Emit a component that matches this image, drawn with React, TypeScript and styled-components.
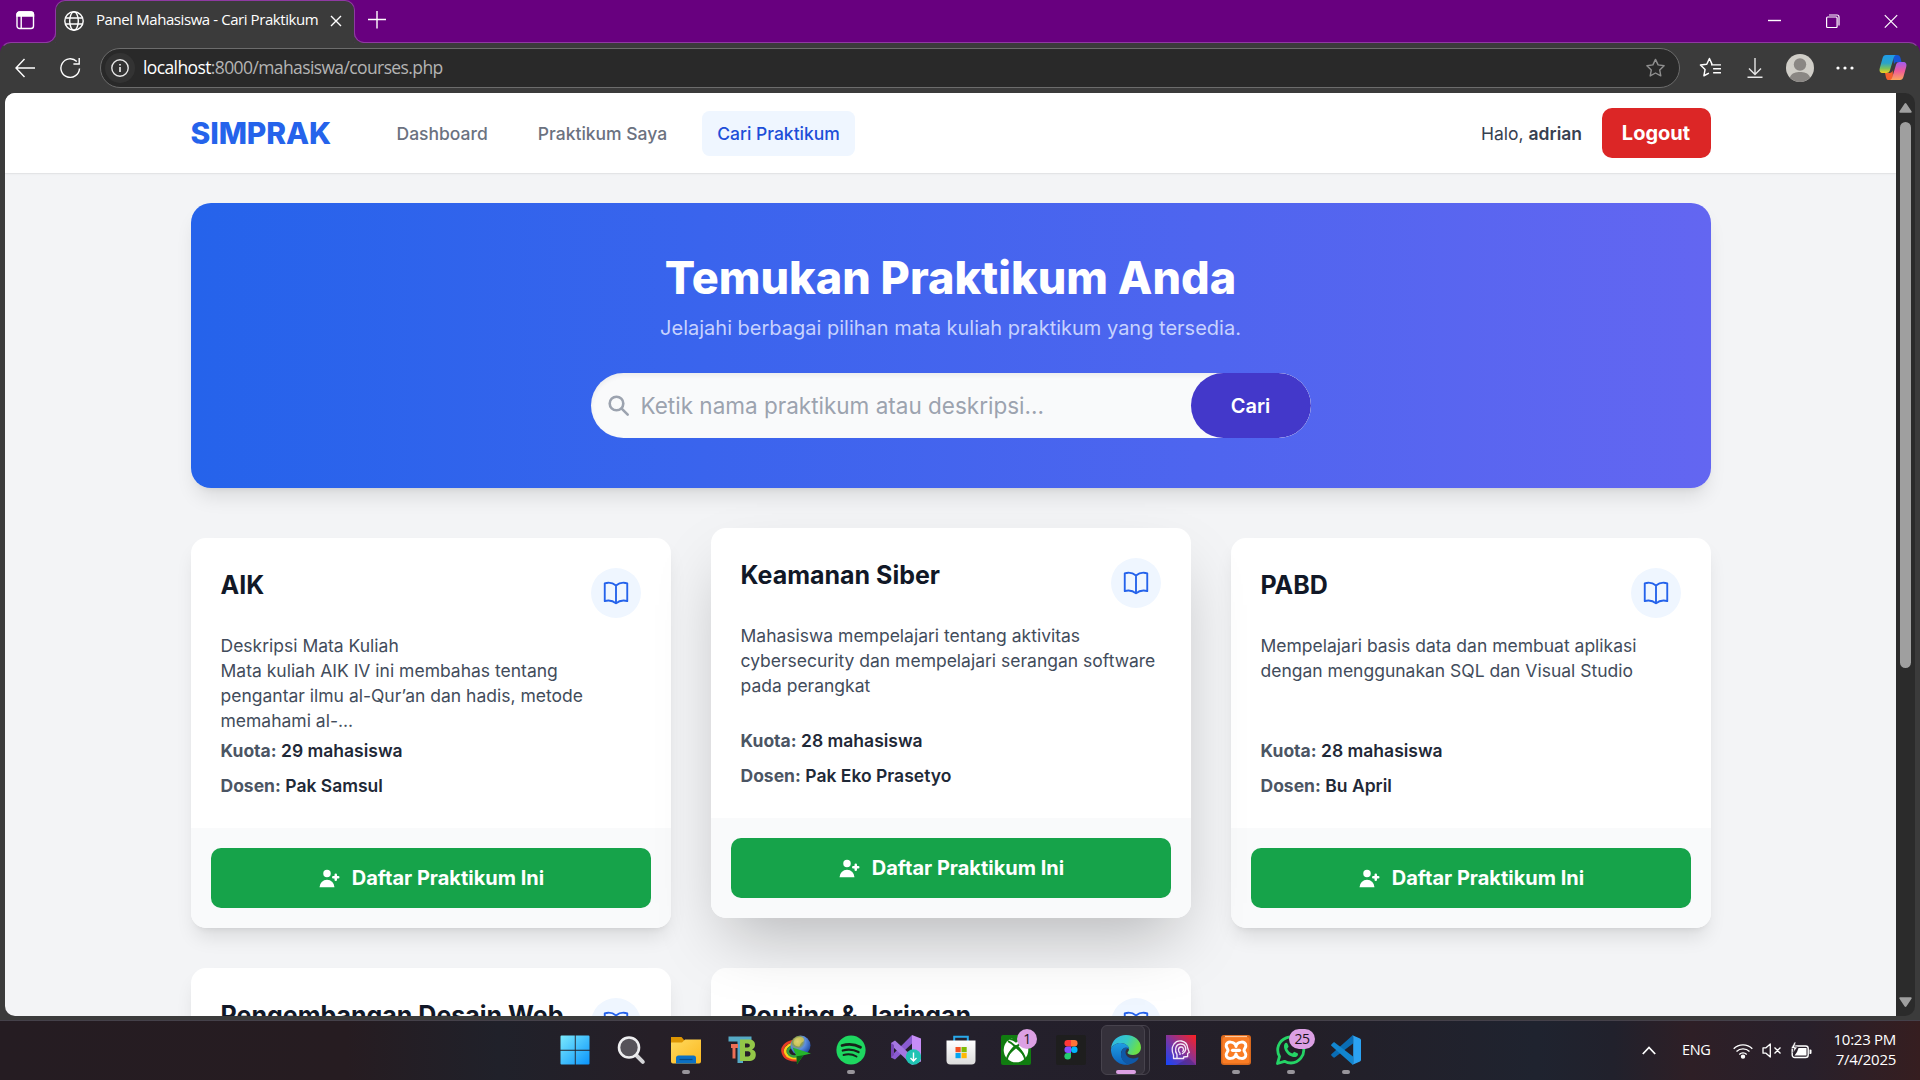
import React from 'react';
import styled, { createGlobalStyle, css } from 'styled-components';

const UI = "'Open Sans', 'Noto Sans', sans-serif";

const Global = createGlobalStyle`
  *, *::before, *::after { box-sizing: border-box; }
  body { margin: 0; background: #3b3b3b; font-family: Inter, 'Liberation Sans', sans-serif; overflow: hidden; }
  h1, h2, h3, p { margin: 0; }
  button, input { font-family: inherit; border: 0; }
  svg { display: block; flex: none; }
`;

const Desktop = styled.div`
  width: 1920px;
  height: 1080px;
  display: flex;
  flex-direction: column;
  overflow: hidden;
  background: #3b3b3b;
`;

/* ---------- Browser chrome ---------- */
const TitleBar = styled.div`
  height: 42px;
  flex: none;
  background: #68007f;
  display: flex;
  align-items: flex-start;
  color: #fff;
`;
const WorkspaceButton = styled.div`
  width: 55px;
  height: 41px;
  display: flex;
  padding-left: 16px;
  padding-top: 11px;
`;
const Tab = styled.div`
  position: relative;
  z-index: 2;
  width: 300px;
  height: 43px;
  display: flex;
  align-items: center;
  padding: 0 12px 3px 8px;
  background: #3b3b3b;
  border: 1px solid #8f3aa2;
  border-bottom: 0;
  border-radius: 10px 10px 0 0;
  &::before, &::after {
    content: '';
    position: absolute;
    bottom: 0;
    width: 10px;
    height: 10px;
    border-bottom: 1px solid #8f3aa2;
  }
  &::before {
    left: -10px;
    border-right: 1px solid #8f3aa2;
    border-bottom-right-radius: 10px;
    box-shadow: 2px 2px 0 1px #3b3b3b;
    clip-path: inset(0 -1px 0 0);
  }
  &::after {
    right: -10px;
    border-left: 1px solid #8f3aa2;
    border-bottom-left-radius: 10px;
    box-shadow: -2px 2px 0 1px #3b3b3b;
    clip-path: inset(0 0 0 -1px);
  }
`;
const TabTitle = styled.span`
  flex: 1;
  margin-left: 12px;
  padding-bottom: 3px;
  font: 400 15px/20px ${UI};
  letter-spacing: -0.42px;
  white-space: nowrap;
`;
const NewTab = styled.div`
  padding: 11px 0 0 13px;
`;
const WindowControls = styled.div`
  margin-left: auto;
  display: flex;
  gap: 44px;
  padding: 14px 22px 0 0;
`;
const Toolbar = styled.div`
  height: 51px;
  flex: none;
  background: #68007f;
`;
const ToolbarInner = styled.div`
  height: 51px;
  display: flex;
  align-items: center;
  padding: 0 11px 0 14px;
  background: #3b3b3b;
  border: 1px solid transparent;
  border-top-color: #8f3aa2;
  border-radius: 11px 11px 0 0;
`;
const AddressBar = styled.div`
  width: 1580px;
  height: 40px;
  margin-left: 19px;
  display: flex;
  align-items: center;
  padding: 0 13px 0 4px;
  background: #292929;
  border: 1px solid #6c6c6c;
  border-radius: 20px;
`;
const SiteInfo = styled.div`
  width: 30px;
  height: 30px;
  border-radius: 15px;
  background: #333;
  display: grid;
  place-items: center;
`;
const Url = styled.span`
  flex: 1;
  margin-left: 8px;
  padding-bottom: 2px;
  color: #b4b4b4;
  font: 400 17.5px/24px ${UI};
  letter-spacing: -0.61px;
  b { font-weight: 400; color: #fff; }
`;
const ToolbarActions = styled.div`
  display: flex;
  align-items: center;
  margin-left: 19px;
`;
const ActionSlot = styled.div<{ $w: number }>`
  width: ${p => p.$w}px;
  display: flex;
`;

/* ---------- Window body ---------- */
const WindowBody = styled.div`
  height: 927px;
  flex: none;
  display: flex;
  padding: 0 5px 4px;
`;
const Viewport = styled.div`
  width: 1891px;
  height: 923px;
  overflow: hidden;
  background: #f3f4f6;
  border-radius: 10px 0 0 10px;
`;
const Scrollbar = styled.div`
  width: 19px;
  height: 923px;
  background: #2b2b2b;
  border-radius: 0 10px 10px 0;
  display: flex;
  flex-direction: column;
  align-items: center;
  padding: 10px 0 9px;
`;
const Thumb = styled.div`
  width: 11px;
  height: 546px;
  margin: 9px 0 auto;
  border-radius: 6px;
  background: #9f9f9f;
`;

/* ---------- Page header ---------- */
const Header = styled.header`
  height: 80px;
  background: #fff;
  box-shadow: 0 1px 0 rgba(0, 0, 0, 0.03), 0 1px 2.5px rgba(0, 0, 0, 0.05);
`;
const Container = styled.div`
  width: 1520px;
  margin: 0 auto;
`;
const HeaderRow = styled(Container)`
  height: 80px;
  display: flex;
  align-items: center;
`;
const Logo = styled.span`
  width: 141px;
  font-size: 30px;
  line-height: 40px;
  font-weight: 800;
  letter-spacing: -0.1px;
  color: #2563eb;
`;
const Nav = styled.nav`
  display: flex;
  gap: 20px;
  margin-left: 50px;
`;
const NavLink = styled.a<{ $active?: boolean }>`
  padding: 10px 15px;
  font-size: 17.5px;
  line-height: 25px;
  font-weight: 500;
  border-radius: 7.5px;
  color: ${p => (p.$active ? '#1d4ed8' : '#6b7280')};
  background: ${p => (p.$active ? '#eff6ff' : 'transparent')};
`;
const Greeting = styled.span`
  margin-left: auto;
  margin-right: 19.5px;
  font-size: 17.5px;
  line-height: 25px;
  color: #374151;
  b { font-weight: 600; }
`;
const Logout = styled.button`
  width: 109px;
  height: 50px;
  padding: 0;
  border-radius: 10px;
  background: #dc2626;
  color: #fff;
  font-size: 20px;
  font-weight: 700;
`;

/* ---------- Banner ---------- */
const Banner = styled.section`
  height: 285px;
  margin-top: 30px;
  padding-top: 50px;
  display: flex;
  flex-direction: column;
  align-items: center;
  border-radius: 20px;
  background: linear-gradient(to right, #2563eb, #6366f1);
  box-shadow: 0 12.5px 19px -4px rgba(0, 0, 0, 0.1), 0 5px 7.5px -5px rgba(0, 0, 0, 0.1);
  color: #fff;
`;
const BannerTitle = styled.h1`
  font-size: 45px;
  line-height: 50px;
  font-weight: 800;
`;
const BannerText = styled.p`
  margin-top: 10px;
  font-size: 20px;
  line-height: 30px;
  color: #c7d2fe;
`;
const Search = styled.form`
  width: 720px;
  height: 65px;
  margin-top: 30px;
  display: flex;
  align-items: center;
  overflow: hidden;
  padding-left: 17px;
  border-radius: 33px;
  background: #f9fafb;
  box-shadow: inset 0 2.5px 5px rgba(0, 0, 0, 0.06);
`;
const SearchInput = styled.input`
  flex: 1;
  min-width: 0;
  padding: 0;
  margin-left: 11px;
  background: transparent;
  font-size: 22.5px;
  line-height: 35px;
  outline: 0;
  &::placeholder { color: #9ca3af; opacity: 1; }
`;
const SearchButton = styled.button`
  width: 120px;
  height: 65px;
  padding: 0;
  border-radius: 33px;
  background: #4338ca;
  color: #fff;
  font-size: 20px;
  font-weight: 600;
`;

/* ---------- Course cards ---------- */
const Grid = styled.section`
  margin-top: 50px;
  display: grid;
  grid-template-columns: repeat(3, 480px);
  gap: 40px;
`;
const raised = css`
  transform: translateY(-10px);
  box-shadow: 0 31px 62px -15px rgba(0, 0, 0, 0.25);
`;
const Card = styled.article<{ $raised?: boolean }>`
  height: 390px;
  display: flex;
  flex-direction: column;
  overflow: hidden;
  border-radius: 15px;
  background: #fff;
  box-shadow: 0 12.5px 19px -4px rgba(0, 0, 0, 0.1), 0 5px 7.5px -5px rgba(0, 0, 0, 0.1);
  ${p => p.$raised && raised}
`;
const CardBody = styled.div`
  flex: 1;
  padding: 30px;
`;
const CardHead = styled.div`
  height: 50px;
  display: flex;
  justify-content: space-between;
`;
const CardTitle = styled.h2`
  font-size: 25px;
  line-height: 35px;
  font-weight: 700;
  color: #111827;
`;
const BookBadge = styled.div`
  width: 50px;
  height: 50px;
  border-radius: 25px;
  background: #eff6ff;
  color: #2563eb;
  display: grid;
  place-items: center;
`;
const Description = styled.p`
  height: 100px;
  margin-top: 15px;
  font-size: 17.5px;
  line-height: 25px;
  color: #424c5b;
  white-space: pre-line;
`;
const Meta = styled.p<{ $first?: boolean }>`
  margin-top: ${p => (p.$first ? 5 : 10)}px;
  font-size: 17.5px;
  line-height: 25px;
  font-weight: 600;
  color: #1f2937;
  b { font-weight: 700; color: #4b5563; }
`;
const CardFooter = styled.div`
  height: 100px;
  padding: 20px;
  background: #f9fafb;
`;
const Enroll = styled.button`
  width: 100%;
  height: 60px;
  display: flex;
  align-items: center;
  justify-content: center;
  gap: 10px;
  border-radius: 10px;
  background: #16a34a;
  color: #fff;
  font-size: 20px;
  font-weight: 700;
`;

/* ---------- Taskbar ---------- */
const Taskbar = styled.footer`
  height: 60px;
  flex: none;
  display: flex;
  align-items: center;
  border-top: 1px solid #45414a;
  background: linear-gradient(90deg, #251c22 0%, #261c21 18%, #20212a 26%, #261f27 34%, #24202c 50%, #231f28 68%, #1f232f 80%, #21212c 84%, #2e1f26 88%, #28202b 94%, #361e20 100%);
`;
const Apps = styled.div`
  display: flex;
  height: 59px;
  padding-left: 546px;
`;
const AppSlot = styled.div<{ $w?: number; $active?: boolean; $shift?: number }>`
  position: relative;
  width: ${p => p.$w ?? 55}px;
  height: 50px;
  margin-top: 4px;
  padding-top: 10px;
  padding-left: ${p => p.$shift ?? 0}px;
  display: flex;
  justify-content: center;
  ${p => p.$active && css`
    &::before, &::after {
      content: '';
      position: absolute;
      top: 0;
      height: 50px;
      border-radius: 6px;
      border: 1px solid #47434d;
    }
    &::before { left: 14px; width: 38px; background: #29252f; }
    &::after { left: 3px; width: 44px; background: #35313b; }
  `}
  svg { position: relative; z-index: 1; }
`;
const Indicator = styled.span<{ $active?: boolean }>`
  position: absolute;
  z-index: 2;
  bottom: 1px;
  left: ${p => (p.$active ? 18 : 24)}px;
  width: ${p => (p.$active ? 20 : 8)}px;
  height: 4px;
  border-radius: 2px;
  background: ${p => (p.$active ? '#dca0e4' : '#98959b')};
`;
const Badge = styled.span<{ $wide?: boolean }>`
  position: absolute;
  z-index: 2;
  top: 4px;
  left: ${p => (p.$wide ? 26 : 29)}px;
  width: ${p => (p.$wide ? 26 : 20)}px;
  height: 20px;
  border-radius: 10px;
  background: #dca0e4;
  color: #1c1420;
  font: 400 14px/20px ${UI};
  letter-spacing: -0.6px;
  text-align: center;
`;
const Tray = styled.div`
  margin-left: auto;
  padding-right: 24px;
  display: flex;
  align-items: center;
  height: 59px;
  color: #fff;
  font: 400 15px/20px ${UI};
`;
const Lang = styled.span`
  width: 29px;
  margin: 0 22px 0 26px;
  padding-bottom: 2px;
  font-size: 14.5px;
  letter-spacing: -0.4px;
  white-space: nowrap;
`;
const StatusIcons = styled.div`
  display: flex;
  align-items: center;
  gap: 9px;
  margin-right: 20px;
`;
const Clock = styled.div`
  width: 64px;
  padding-bottom: 4px;
  text-align: right;
  white-space: nowrap;
  letter-spacing: -0.28px;
`;

/* ---------- Browser icons ---------- */
const line = { fill: 'none', stroke: 'currentColor', strokeWidth: 1.4 };
const StarPath = 'M10 1.4l2.6 5.5 6 .8-4.4 4.2 1.1 6-5.3-2.9-5.3 2.9 1.1-6L1.4 7.7l6-.8z';

const CopilotIcon = () => (
  <svg width="28" height="27" viewBox="0 0 28 27">
    <defs>
      <linearGradient id="cpA" x1="0" y1="0" x2="0" y2="1">
        <stop offset="0" stopColor="#1f9be8" /><stop offset=".45" stopColor="#2aa3c9" /><stop offset=".75" stopColor="#7cc25a" /><stop offset="1" stopColor="#f5cf1e" />
      </linearGradient>
      <linearGradient id="cpB" x1="0" y1="0" x2="0" y2="1">
        <stop offset="0" stopColor="#a15cf0" /><stop offset=".5" stopColor="#ee5a9a" /><stop offset="1" stopColor="#fba65c" />
      </linearGradient>
    </defs>
    <path d="M14 1h4c2 0 3 1.200 3.500 3l1 4h-4c-2 0-3 .8-3.500 2.500z" fill="#1555d6" />
    <path d="M14 26h-4c-1.800 0-2.600-1-3-2.600L6 19h4.500c1.800 0 2.600-1 3.200-2.800z" fill="#f4602d" />
    <path d="M7 1h10c-1.500.6-2 1.800-2.500 3.500l-3.600 12C10.400 18.200 9 19 7.500 19H4c-3 0-4-2-3.200-5L3.600 4C4.200 2 5.200 1 7 1z" fill="url(#cpA)" />
    <path d="M21 26H11c1.500-.6 2-1.800 2.500-3.500l3.600-12C17.600 8.800 19 8 20.500 8H24c3 0 4 2 3.200 5l-2.800 10c-.6 2-1.600 3-3.400 3z" fill="url(#cpB)" />
  </svg>
);

/* ---------- Page icons ---------- */
const BookIcon = () => (
  <svg width="30" height="30" viewBox="0 0 24 24" fill="none" stroke="currentColor" strokeWidth="1.5" strokeLinecap="round" strokeLinejoin="round">
    <path d="M12 6.042A8.967 8.967 0 0 0 6 3.750c-1.052 0-2.062.180-3 .512v14.250A8.987 8.987 0 0 1 6 18c2.305 0 4.408.867 6 2.292m0-14.250a8.966 8.966 0 0 1 6-2.292c1.052 0 2.062.180 3 .512v14.250A8.987 8.987 0 0 0 18 18a8.967 8.967 0 0 0-6 2.292m0-14.250v14.250" />
  </svg>
);
const UserAddIcon = () => (
  <svg width="25" height="25" viewBox="0 0 20 20" fill="currentColor">
    <path d="M8 9a3 3 0 100-6 3 3 0 000 6zM8 11a6 6 0 016 6H2a6 6 0 016-6zM16 7a1 1 0 10-2 0v1h-1a1 1 0 100 2h1v1a1 1 0 102 0v-1h1a1 1 0 100-2h-1V7z" />
  </svg>
);

/* ---------- Taskbar icons ---------- */
const I = ({ children }: { children: React.ReactNode }) => (
  <svg width="30" height="30" viewBox="0 0 30 30">{children}</svg>
);

const WindowsIcon = () => (
  <I>
    <defs><linearGradient id="win" x1="0" y1="0" x2="1" y2="1"><stop offset="0" stopColor="#7beafd" /><stop offset="1" stopColor="#0a94fb" /></linearGradient></defs>
    <path d="M1.500.5h13.300v14.300H.5V1.500a1 1 0 011-1zM15.700.5h12.800a1 1 0 011 1v13.300H15.700zM.5 15.700h14.300v13.800H1.500a1 1 0 01-1-1zM15.700 15.700h13.800v12.800a1 1 0 01-1 1H15.700z" fill="url(#win)" />
  </I>
);
const SearchAppIcon = () => (
  <I>
    <path d="M20.500 20.500l6.300 6.300" stroke="#d5d5d8" strokeWidth="4" strokeLinecap="round" />
    <circle cx="13" cy="12.500" r="10" fill="#56535a" stroke="#eeeef0" strokeWidth="2.600" />
  </I>
);
const ExplorerIcon = () => (
  <I>
    <defs><linearGradient id="fold" x1="0" y1="0" x2="1" y2="1"><stop offset="0" stopColor="#ffd95e" /><stop offset="1" stopColor="#fbb81f" /></linearGradient></defs>
    <path d="M0 2h10.500l3 3.500V9H0z" fill="#dd9503" />
    <path d="M0 7.500h11l3-3h16V26.500a2 2 0 01-2 2H2a2 2 0 01-2-2z" fill="url(#fold)" />
    <path d="M5 28.500v-5.500a2.500 2.500 0 012.500-2.500h15a2.500 2.500 0 012.500 2.500v5.500z" fill="#0c70c4" />
    <path d="M8.500 24.500h13" stroke="#064a87" strokeWidth="1.200" />
  </I>
);
const TBIcon = () => (
  <I>
    <path d="M.5 1.500h23v5H15V28H9.500V6.500h-9z" fill="#55a9c5" />
    <path d="M3 9h7v4H7.500v10.500H4.500V13H3z" fill="#ee6f56" />
    <path d="M12 4.500h8.500c4.500 0 6.500 2 6.500 5.300 0 2.400-1.200 4-3 4.700 2.500.7 3.800 2.500 3.800 5.200 0 4.300-2.800 6.300-7.300 6.300H12zM17 8.500v4h2.500c1.500 0 2.300-.7 2.300-2s-.8-2-2.300-2zm0 7.700v5.200h3c1.600 0 2.500-1 2.500-2.600s-.9-2.600-2.500-2.600z" fill="#93c748" fillRule="evenodd" />
  </I>
);
const IdmIcon = () => (
  <I>
    <defs><radialGradient id="glb" cx=".35" cy=".3" r=".8"><stop offset="0" stopColor="#fff6bd" /><stop offset=".3" stopColor="#8b9c4a" /><stop offset=".5" stopColor="#5c8de0" /><stop offset="1" stopColor="#123e96" /></radialGradient></defs>
    <g fill="none" strokeWidth="2.600">
      <path d="M12 6C4 8 0 13 2 18c2 6 9 8 15 7" stroke="#e93c25" />
      <path d="M12 8.500c-6 2-9 5.500-7.500 9.500 1.600 4 7 6 12 5" stroke="#f8ce1c" />
      <path d="M12 11c-4 1.500-6 4-5 6.500 1.500 3.500 6 4.500 10 3.500" stroke="#35a13e" />
    </g>
    <circle cx="19.500" cy="10.500" r="10" fill="url(#glb)" />
    <path d="M16 3c4-2 7-.5 7 2s-4 2-4 5-5 1-6-1 1-5 3-6z" fill="#d4c95c" opacity=".8" />
    <path d="M11.500 12.500L30 18.500l-7.500 1.800-6.500 9-.5-8z" fill="#25b52c" />
    <path d="M15.500 21.300l7-1L16 29.300z" fill="#0a6413" />
  </I>
);
const SpotifyIcon = () => (
  <I>
    <circle cx="15" cy="15" r="14.600" fill="#1ed760" />
    <g fill="none" stroke="#16231a" strokeLinecap="round">
      <path d="M6 10.500c6.500-1.800 13-1.300 18.500 1.800" strokeWidth="2.700" />
      <path d="M6.800 15.500c5.500-1.500 11-1 15.700 1.600" strokeWidth="2.300" />
      <path d="M7.500 20c4.500-1.200 9-.8 13 1.500" strokeWidth="1.900" />
    </g>
  </I>
);
const VisualStudioIcon = () => (
  <I>
    <path d="M21 0l9 3.500v23L21 30z" fill="#c78df7" />
    <path d="M21 0v8.500L4 24.500l-4-2v-1.300z" fill="#8a5bd0" />
    <path d="M0 8l4-2.500L21 21v9L0 10z" fill="#a477e0" />
    <path d="M0 8v14.500L3 20V10z" fill="#7747b5" />
    <circle cx="22.500" cy="22" r="7.700" fill="#20c3b3" />
    <path d="M22.500 17.500v8.500m-3-3l3 3 3-3" fill="none" stroke="#fff" strokeWidth="1.400" />
  </I>
);
const StoreIcon = () => (
  <I>
    <defs><linearGradient id="sto" x1="0" y1="0" x2="0" y2="1"><stop offset="0" stopColor="#fff" /><stop offset="1" stopColor="#dcdcdc" /></linearGradient></defs>
    <path d="M8.200 7V1.800h13.600V7" fill="none" stroke="#29a9ea" strokeWidth="2" />
    <path d="M.5 5.500h29v20a4 4 0 01-4 4h-21a4 4 0 01-4-4z" fill="url(#sto)" />
    <path d="M9.500 12h5.200v5.200H9.500z" fill="#f35022" /><path d="M15.500 12h5.200v5.200h-5.200z" fill="#80bb03" />
    <path d="M9.500 18h5.200v5.200H9.500z" fill="#03a5f0" /><path d="M15.500 18h5.200v5.200h-5.200z" fill="#ffb903" />
  </I>
);
const XboxIcon = () => (
  <I>
    <rect width="30" height="30" rx="2" fill="#107c10" />
    <circle cx="15" cy="15" r="12.300" fill="#fff" />
    <path d="M7.500 5C10 4.500 13 6 15 7.700 17 6 20 4.500 22.500 5L15 1.500zM5.500 24.500C7 18 11 12.500 15 9.700c4 2.800 8 8.300 9.500 14.800-2-4.300-6-8.500-9.500-11-3.500 2.500-7.500 6.700-9.500 11z" fill="#107c10" />
    <path d="M7 6.200c3 1.300 5.500 3.500 7 5-4 4-7.500 9-8.500 14" fill="none" stroke="#107c10" strokeWidth="2" />
    <path d="M23 6.200c-3 1.300-5.500 3.500-7 5 4 4 7.500 9 8.500 14" fill="none" stroke="#107c10" strokeWidth="2" />
  </I>
);
const FigmaIcon = () => (
  <I>
    <rect width="30" height="30" rx="2" fill="#1e1e1e" />
    <path d="M11.700 5H15v6.500h-3.300a3.250 3.250 0 010-6.500z" fill="#ff3737" />
    <path d="M15 5h3.300a3.250 3.250 0 010 6.500H15z" fill="#ff7237" />
    <path d="M11.700 11.500H15V18h-3.300a3.250 3.250 0 010-6.500z" fill="#874fff" />
    <circle cx="18.300" cy="14.750" r="3.250" fill="#00b6ff" />
    <path d="M11.700 18H15v3.300A3.300 3.300 0 1111.700 18z" fill="#24cb71" />
  </I>
);
const EdgeIcon = () => (
  <I>
    <defs>
      <linearGradient id="eg1" x1="0" y1="0" x2="1" y2=".35"><stop offset="0" stopColor="#2fb4ea" /><stop offset=".55" stopColor="#35c9c5" /><stop offset="1" stopColor="#6be048" /></linearGradient>
      <linearGradient id="eg2" x1="0" y1="0" x2="0" y2="1"><stop offset="0" stopColor="#1f9ee3" /><stop offset="1" stopColor="#0d63bd" /></linearGradient>
    </defs>
    <path d="M0 14C.5 5.500 7 0 15 0c9 0 15 6 15 12.500 0 4.500-3.500 7.500-8 7.500-3.500 0-5.500-1-5.500-2.200 0-.9 1.500-1.400 1.500-3.800C18 11 14 8 9.500 8 5 8 1.500 10.500 0 14z" fill="url(#eg1)" />
    <path d="M0 14c1.500-3.500 5-6 9.500-6 4.500 0 8.500 3 8.500 6-4-3-8 0-8 5 0 5.500 4 9.500 9 10.300A15 15 0 010 14z" fill="url(#eg2)" />
    <path d="M18 13c-4.500-2-8 2-8 6.500 0 6 5 10.500 10 9.500 3.500-1 6-3 7.500-5.700.4-.8-.2-1.100-1-.8C21 25 14.500 22.500 14.500 17c0-1.800 1.300-3.500 3.500-4z" fill="#0f58a7" />
  </I>
);
const HeadIcon = () => (
  <I>
    <defs><linearGradient id="hd" x1="0" y1="1" x2="1" y2="0"><stop offset="0" stopColor="#1346fb" /><stop offset=".5" stopColor="#84349a" /><stop offset="1" stopColor="#fd2020" /></linearGradient></defs>
    <rect width="30" height="30" fill="url(#hd)" />
    <path d="M23 23l7 7H10z" fill="#35206d" opacity=".35" />
    <g fill="none" stroke="#f3e8f7" strokeWidth="1.300" strokeLinejoin="round">
      <path d="M7.500 23.500V20c-2-4-1.500-8 .5-11 1.800-2.500 4.500-3.500 7.500-3 4 .7 6 3.500 6.300 7.500l1.500 4-1.700.8v3.200l-4 .5v1.500z" />
      <path d="M11 23v-3.500c-2.500-3.500-2-10 3.500-10.500 5-.3 6.500 5 4 8l-2.500 2" />
      <path d="M14 20v-2c-2-1.500-2.300-5.500.8-6 3-.2 3.500 3.500 1.500 4.800" />
    </g>
  </I>
);
const XamppIcon = () => (
  <I>
    <rect width="30" height="30" rx="3" fill="#d9681d" />
    <rect x="1.500" y="2" width="27" height="26.500" rx="2.500" fill="#fa7d25" />
    <path d="M4 1.500h22" stroke="#fcc79d" strokeWidth="1.200" />
    <path d="M15 11.500C14 6 4.700 5.500 5.200 11c.2 2 1.800 3 1.800 4.300s-1.600 2.200-1.800 4.200c-.5 5.500 8.800 5 9.800-.5 1 5.500 10.300 6 9.800.5-.2-2-1.800-2.900-1.800-4.200s1.600-2.300 1.800-4.300c.5-5.500-8.800-5-9.800.5z" fill="none" stroke="#fff" strokeWidth="3" strokeLinejoin="round" />
    <path d="M11.500 15.300h7" stroke="#fff" strokeWidth="3.200" strokeLinecap="round" />
  </I>
);
const WhatsAppIcon = () => (
  <I>
    <path d="M1.500 28.500l2-7A13 13 0 1115 28c-2.300 0-4.500-.6-6.500-1.700z" fill="none" stroke="#25d366" strokeWidth="2.800" strokeLinejoin="round" />
    <path d="M8.500 9c.8-1.500 2.500-1.500 3-.3l1 2.500c.3.800-1 1.800-1.300 2.500 1 2.200 2.800 3.900 5.200 4.900.8-.4 1.500-2 2.300-1.700l2.800 1.300c1 .5.500 2.500-.8 3.300-1.500 1-3.700.8-6.700-.7C10.500 19 6.500 13 8.500 9z" fill="#25d366" />
  </I>
);
const VSCodeIcon = () => (
  <I>
    <path d="M22 0v8.500L4 22.300c-.6.500-1.300.4-1.800 0L.6 20.700a1.200 1.200 0 010-1.800z" fill="#0a6db5" />
    <path d="M22 30v-8.500L4 7.700c-.6-.5-1.300-.4-1.800 0L.6 9.300a1.200 1.200 0 000 1.800z" fill="#1286cf" />
    <path d="M21.500.2L29 3.500c.6.300 1 .9 1 1.500v20c0 .6-.4 1.200-1 1.500l-7.500 3.300c.4-.3.700-.9.700-1.500V1.700c0-.6-.3-1.200-.7-1.500z" fill="#2ba2f2" />
  </I>
);

type App = { icon: React.ReactNode; w?: number; shift?: number; running?: boolean; active?: boolean; badge?: string };
const apps: App[] = [
  { icon: <WindowsIcon />, w: 57 },
  { icon: <SearchAppIcon /> },
  { icon: <ExplorerIcon />, running: true },
  { icon: <TBIcon />, shift: 4 },
  { icon: <IdmIcon /> },
  { icon: <SpotifyIcon />, running: true },
  { icon: <VisualStudioIcon /> },
  { icon: <StoreIcon /> },
  { icon: <XboxIcon />, badge: '1' },
  { icon: <FigmaIcon /> },
  { icon: <EdgeIcon />, running: true, active: true },
  { icon: <HeadIcon /> },
  { icon: <XamppIcon />, running: true },
  { icon: <WhatsAppIcon />, running: true, badge: '25' },
  { icon: <VSCodeIcon />, running: true },
];

type Course = { title: string; description: string; quota: string; lecturer: string; raised?: boolean };
const courses: Course[] = [
  {
    title: 'AIK',
    description: 'Deskripsi Mata Kuliah\nMata kuliah AIK IV ini membahas tentang pengantar ilmu al-Qur’an dan hadis, metode memahami al-...',
    quota: '29 mahasiswa',
    lecturer: 'Pak Samsul',
  },
  {
    title: 'Keamanan Siber',
    description: 'Mahasiswa mempelajari tentang aktivitas cybersecurity dan mempelajari serangan software pada perangkat',
    quota: '28 mahasiswa',
    lecturer: 'Pak Eko Prasetyo',
    raised: true,
  },
  {
    title: 'PABD',
    description: 'Mempelajari basis data dan membuat aplikasi dengan menggunakan SQL dan Visual Studio',
    quota: '28 mahasiswa',
    lecturer: 'Bu April',
  },
  { title: 'Pengembangan Desain Web', description: '', quota: '', lecturer: '' },
  { title: 'Routing & Jaringan', description: '', quota: '', lecturer: '' },
];

const CourseCard = ({ course }: { course: Course }) => (
  <Card $raised={course.raised}>
    <CardBody>
      <CardHead>
        <CardTitle>{course.title}</CardTitle>
        <BookBadge><BookIcon /></BookBadge>
      </CardHead>
      {course.description && (
        <>
          <Description>{course.description}</Description>
          <Meta $first><b>Kuota:</b> {course.quota}</Meta>
          <Meta><b>Dosen:</b> {course.lecturer}</Meta>
        </>
      )}
    </CardBody>
    {course.description && (
      <CardFooter>
        <Enroll>
          <UserAddIcon />
          Daftar Praktikum Ini
        </Enroll>
      </CardFooter>
    )}
  </Card>
);

const BrowserChrome = () => (
  <>
    <TitleBar>
      <WorkspaceButton>
        <svg width="19" height="19" viewBox="0 0 19 19" {...line}>
          <rect x="1" y="1" width="16.500" height="16.500" rx="2.500" />
          <path d="M1 3.500A2.500 2.500 0 013.500 1H15a2.500 2.500 0 012.500 2.500V5H1z" fill="currentColor" />
          <path d="M5.200 5v12.500" />
        </svg>
      </WorkspaceButton>
      <Tab>
        <svg width="20" height="20" viewBox="0 0 20 20" {...line}>
          <circle cx="10" cy="10" r="9.200" /><ellipse cx="10" cy="10" rx="4.300" ry="9.200" /><path d="M1.500 7h17M1.500 13h17" />
        </svg>
        <TabTitle>Panel Mahasiswa - Cari Praktikum</TabTitle>
        <svg width="12" height="12" viewBox="0 0 12 12" {...line}><path d="M1 1l10 10M11 1L1 11" /></svg>
      </Tab>
      <NewTab>
        <svg width="18" height="18" viewBox="0 0 18 18" {...line}><path d="M9 0v17.500M0 8.500h18" /></svg>
      </NewTab>
      <WindowControls>
        <svg width="14" height="14" viewBox="0 0 14 14" {...line}><path d="M0 6.500h13" /></svg>
        <svg width="14" height="14" viewBox="0 0 14 14" {...line} strokeWidth={1.2}><rect x=".6" y="3" width="10.500" height="10.500" rx="1" /><path d="M3 1h8a2 2 0 012 2v8.500" /></svg>
        <svg width="14" height="14" viewBox="0 0 14 14" {...line} strokeWidth={1.2}><path d="M.8 1.200l12.400 12.400M13.200 1.200L.8 13.600" /></svg>
      </WindowControls>
    </TitleBar>
    <Toolbar>
      <ToolbarInner>
        <svg width="20" height="20" viewBox="0 0 20 20" {...line} color="#fff"><path d="M9.500 1L1 10l8.500 9M1 10h19" /></svg>
        <ActionSlot $w={46}>
          <svg width="46" height="22" viewBox="0 0 46 22" {...line} color="#fff">
            <path d="M44.500 11.500A9.300 9.300 0 1141.800 4.500M44.200 1v6h-5.800" />
          </svg>
        </ActionSlot>
        <AddressBar>
          <SiteInfo>
            <svg width="18" height="18" viewBox="0 0 18 18" {...line} color="#e8e8e8"><circle cx="9" cy="9" r="8.200" /><path d="M9 8v5M9 5v1.600" strokeWidth="1.700" /></svg>
          </SiteInfo>
          <Url><b>localhost</b>:8000/mahasiswa/courses.php</Url>
          <svg width="21" height="20" viewBox="0 0 20 20" {...line} color="#8f8f8f"><path d={StarPath} strokeLinejoin="round" /></svg>
        </AddressBar>
        <ToolbarActions>
          <ActionSlot $w={48}>
            <svg width="23" height="21" viewBox="0 0 22 20" {...line} color="#fff">
              <path d="M12.500 7L10 1.400 7.400 6.900l-6 .8 4.400 4.200-1.100 6 4.800-2.600M11.500 7.500H21M13.500 11.200H21M13.500 15H21" strokeLinejoin="round" />
            </svg>
          </ActionSlot>
          <ActionSlot $w={39}>
            <svg width="16" height="20" viewBox="0 0 16 20" {...line} color="#e6e6e6"><path d="M8 0v16M2 10.500L8 16.500l6-6M.5 19.200h15" /></svg>
          </ActionSlot>
          <ActionSlot $w={50}>
            <svg width="28" height="28" viewBox="0 0 28 28">
              <circle cx="14" cy="14" r="14" fill="#d0cec8" />
              <circle cx="14" cy="10.500" r="6.200" fill="#8a8784" />
              <path d="M3.800 23.500C6 18.600 10 18 14 18s8 .6 10.200 5.500A14 14 0 0114 28a14 14 0 01-10.200-4.500z" fill="#8a8784" />
            </svg>
          </ActionSlot>
          <ActionSlot $w={43}>
            <svg width="18" height="4" viewBox="0 0 18 4" fill="#fff"><circle cx="2" cy="2" r="1.600" /><circle cx="9" cy="2" r="1.600" /><circle cx="16" cy="2" r="1.600" /></svg>
          </ActionSlot>
          <CopilotIcon />
        </ToolbarActions>
      </ToolbarInner>
    </Toolbar>
  </>
);

export default function App() {
  return (
    <Desktop>
      <Global />
      <BrowserChrome />
      <WindowBody>
        <Viewport>
          <Header>
            <HeaderRow>
              <Logo>SIMPRAK</Logo>
              <Nav>
                <NavLink>Dashboard</NavLink>
                <NavLink>Praktikum Saya</NavLink>
                <NavLink $active>Cari Praktikum</NavLink>
              </Nav>
              <Greeting>Halo, <b>adrian</b></Greeting>
              <Logout>Logout</Logout>
            </HeaderRow>
          </Header>
          <Container>
            <Banner>
              <BannerTitle>Temukan Praktikum Anda</BannerTitle>
              <BannerText>Jelajahi berbagai pilihan mata kuliah praktikum yang tersedia.</BannerText>
              <Search>
                <svg width="22" height="22" viewBox="0 0 22 22" fill="none" stroke="#9ca3af" strokeWidth="2.600" strokeLinecap="round"><circle cx="8.500" cy="8.500" r="6.800" /><path d="M13.700 13.700l6 6" /></svg>
                <SearchInput placeholder="Ketik nama praktikum atau deskripsi..." />
                <SearchButton type="button">Cari</SearchButton>
              </Search>
            </Banner>
            <Grid>
              {courses.map(c => <CourseCard key={c.title} course={c} />)}
            </Grid>
          </Container>
        </Viewport>
        <Scrollbar>
          <svg width="13" height="10" viewBox="0 0 13 10" fill="#9f9f9f"><path d="M5.500.8a1.200 1.200 0 012 0l5 7.400c.5.800 0 1.600-.9 1.600H1.400C.5 9.800 0 9 .5 8.200z" /></svg>
          <Thumb />
          <svg width="13" height="10" viewBox="0 0 13 10" fill="#9f9f9f"><path d="M5.500 9.200a1.200 1.200 0 002 0l5-7.400C13 1 12.500.2 11.600.2H1.400C.5.200 0 1 .5 1.800z" /></svg>
        </Scrollbar>
      </WindowBody>
      <Taskbar>
        <Apps>
          {apps.map((a, i) => (
            <AppSlot key={i} $w={a.w} $active={a.active} $shift={a.shift}>
              {a.icon}
              {a.badge && <Badge $wide={a.badge.length > 1}>{a.badge}</Badge>}
              {a.running && <Indicator $active={a.active} />}
            </AppSlot>
          ))}
        </Apps>
        <Tray>
          <svg width="14" height="9" viewBox="0 0 14 9" fill="none" stroke="#fff" strokeWidth="1.800"><path d="M.8 8L7 1.500 13.200 8" /></svg>
          <Lang>ENG</Lang>
          <StatusIcons>
            <svg width="20" height="16" viewBox="0 0 20 16" fill="none" stroke="#fff" strokeWidth="1.400">
              <path d="M.7 5.700a13.200 13.200 0 0118.600 0M3.500 8.600a9.200 9.200 0 0113 0M6.300 11.400a5.200 5.200 0 017.400 0" /><circle cx="10" cy="13.600" r="1.500" fill="#fff" />
            </svg>
            <svg width="20" height="15" viewBox="0 0 20 15" fill="none" stroke="#fff" strokeWidth="1.300">
              <path d="M1 4.800h3L8.300 1v13L4 10.200H1zM12.500 4.500l6 6M18.500 4.500l-6 6" strokeLinejoin="round" />
            </svg>
            <svg width="21" height="17" viewBox="0 0 21 17">
              <rect x="1.200" y="4" width="16" height="11.500" rx="2.500" fill="none" stroke="#fff" strokeWidth="1.400" />
              <path d="M7.500 6h8v7.500h-12L6 10z" fill="#fff" /><path d="M18.500 7.500h1a1 1 0 011 1v2.500a1 1 0 01-1 1h-1z" fill="#fff" />
              <path d="M3.500 0L0 6.500h3L2 11l4.500-6h-3L5 0z" fill="#fff" stroke="#28202b" strokeWidth=".6" />
            </svg>
          </StatusIcons>
          <Clock>10:23 PM<br />7/4/2025</Clock>
        </Tray>
      </Taskbar>
    </Desktop>
  );
}
